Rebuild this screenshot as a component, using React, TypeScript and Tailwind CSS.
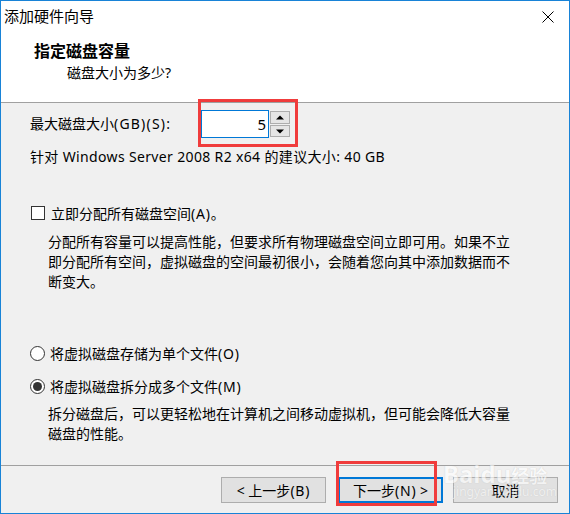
import React from "react";

const font = "font-['Noto_Sans','Noto_Sans_CJK_SC',sans-serif]";

function Btn({ children, primary }: { children: React.ReactNode; primary?: boolean }) {
  return (
    <div
      className={
        "flex h-[26px] w-[105px] items-center justify-center bg-[#e1e1e1] text-[14px] text-black " +
        (primary ? "border-2 border-[#0078d7]" : "border border-[#adadad]")
      }
    >
      <span className="whitespace-pre">{children}</span>
    </div>
  );
}

export default function App() {
  return (
    <div className={"relative flex h-[514px] w-[570px] flex-col border border-[#1883d7] bg-white text-black " + font}>
      {/* title bar */}
      <div className="flex h-[30px] items-center justify-between pl-[3px] pr-[15px]">
        <span className="text-[15px] leading-none">添加硬件向导</span>
        <svg width="12" height="12" viewBox="0 0 12 12" className="mt-[1px]">
          <path d="M0.5 0.5 L11.5 11.5 M11.5 0.5 L0.5 11.5" stroke="#000" strokeWidth="1" fill="none" />
        </svg>
      </div>
      {/* header */}
      <div className="h-[72px] border-b border-[#a0a0a0] bg-white">
        <div className="ml-[33px] mt-[10px] text-[16px] font-bold leading-[20px]">指定磁盘容量</div>
        <div className="ml-[66px] mt-[2px] text-[14px] leading-[20px]">磁盘大小为多少?</div>
      </div>
      {/* body */}
      <div className="flex-1 bg-[#f0f0f0] pl-[29px] text-[14px]">
        <div className="mt-[7px] flex h-[28px] items-center">
          <span className="w-[171px] leading-[20px]">
            最大磁盘大小<span className="tracking-[1.2px]">(GB)(S):</span>
          </span>
          <div className="relative flex h-[28px]">
            <div className="flex h-[28px] w-[68px] items-center justify-end border border-[#0078d7] bg-white pr-[2px] text-[15px]">
              5
            </div>
            <div className="ml-[1px] flex w-[20px] flex-col gap-[1px] py-[1px]">
              <div className="flex h-[13px] items-center justify-center border border-[#adadad] bg-[#e5e5e5]">
                <svg width="8" height="5" viewBox="0 0 8 5"><path d="M0 4.5 L4 0.5 L8 4.5 Z" fill="#000" /></svg>
              </div>
              <div className="flex h-[12px] items-center justify-center border border-[#adadad] bg-[#e5e5e5]">
                <svg width="8" height="5" viewBox="0 0 8 5"><path d="M0 0.5 L8 0.5 L4 4.5 Z" fill="#000" /></svg>
              </div>
            </div>
            <div className="absolute left-[-3px] top-[-11px] h-[48px] w-[100px] border-[3px] border-[#f03c3c]" />
          </div>
        </div>
        <div className="mt-[9px] leading-[20px] tracking-[0.35px]">针对 Windows Server 2008 R2 x64 的建议大小: 40 GB</div>
        <div className="mt-[36px] flex h-[20px] items-center">
          <div className="ml-[1px] h-[14px] w-[14px] border border-[#333] bg-white" />
          <span className="ml-[6px]">
            立即分配所有磁盘空间<span className="tracking-[0.8px]">(A)</span>。
          </span>
        </div>
        <div className="ml-[18px] mt-[9px] leading-[20px]">
          <div>分配所有容量可以提高性能，但要求所有物理磁盘空间立即可用。如果不立</div>
          <div>即分配所有空间，虚拟磁盘的空间最初很小，会随着您向其中添加数据而不</div>
          <div>断变大。</div>
        </div>
        <div className="mt-[51px] flex h-[20px] items-center">
          <div className="h-[15px] w-[15px] rounded-full border border-[#333] bg-white" />
          <span className="ml-[5px]">
            将虚拟磁盘存储为单个文件<span className="tracking-[0.8px]">(O)</span>
          </span>
        </div>
        <div className="mt-[13px] flex h-[20px] items-center">
          <div className="flex h-[15px] w-[15px] items-center justify-center rounded-full border border-[#333] bg-white">
            <div className="h-[9px] w-[9px] rounded-full bg-[#333]" />
          </div>
          <span className="ml-[5px]">
            将虚拟磁盘拆分成多个文件<span className="tracking-[0.8px]">(M)</span>
          </span>
        </div>
        <div className="ml-[18px] mt-[8px] leading-[20px]">
          <div>拆分磁盘后，可以更轻松地在计算机之间移动虚拟机，但可能会降低大容量</div>
          <div>磁盘的性能。</div>
        </div>
      </div>
      {/* footer */}
      <div className="relative h-[48px] border-t border-[#a0a0a0] bg-[#f0f0f0]">
        <div className="flex pl-[220px] pt-[11px]">
          <Btn>
            {"< 上一步"}
            <span className="tracking-[0.8px]">(B)</span>
          </Btn>
          <div className="relative ml-[12px]">
            <Btn primary>
              {"下一步"}
              <span className="tracking-[0.8px]">(N)</span>
              {" >"}
            </Btn>
            <div className="absolute left-[-2px] top-[-16px] h-[45px] w-[101px] border-[3px] border-[#f03c3c]" />
          </div>
          <div className="ml-[10px]">
            <Btn>取消</Btn>
          </div>
        </div>
        <div className="pointer-events-none absolute left-[442px] top-[-4px] text-[24px] font-bold leading-none text-white opacity-60 [text-shadow:0_0_1px_#b0b0b0]">
          Baidu<span className="text-[18px]">经验</span>
        </div>
        <div className="pointer-events-none absolute left-[452px] top-[20px] text-[12px] leading-none text-white opacity-50 [text-shadow:0_0_1px_#b0b0b0]">
          jingyan.baidu.com
        </div>
      </div>
    </div>
  );
}
